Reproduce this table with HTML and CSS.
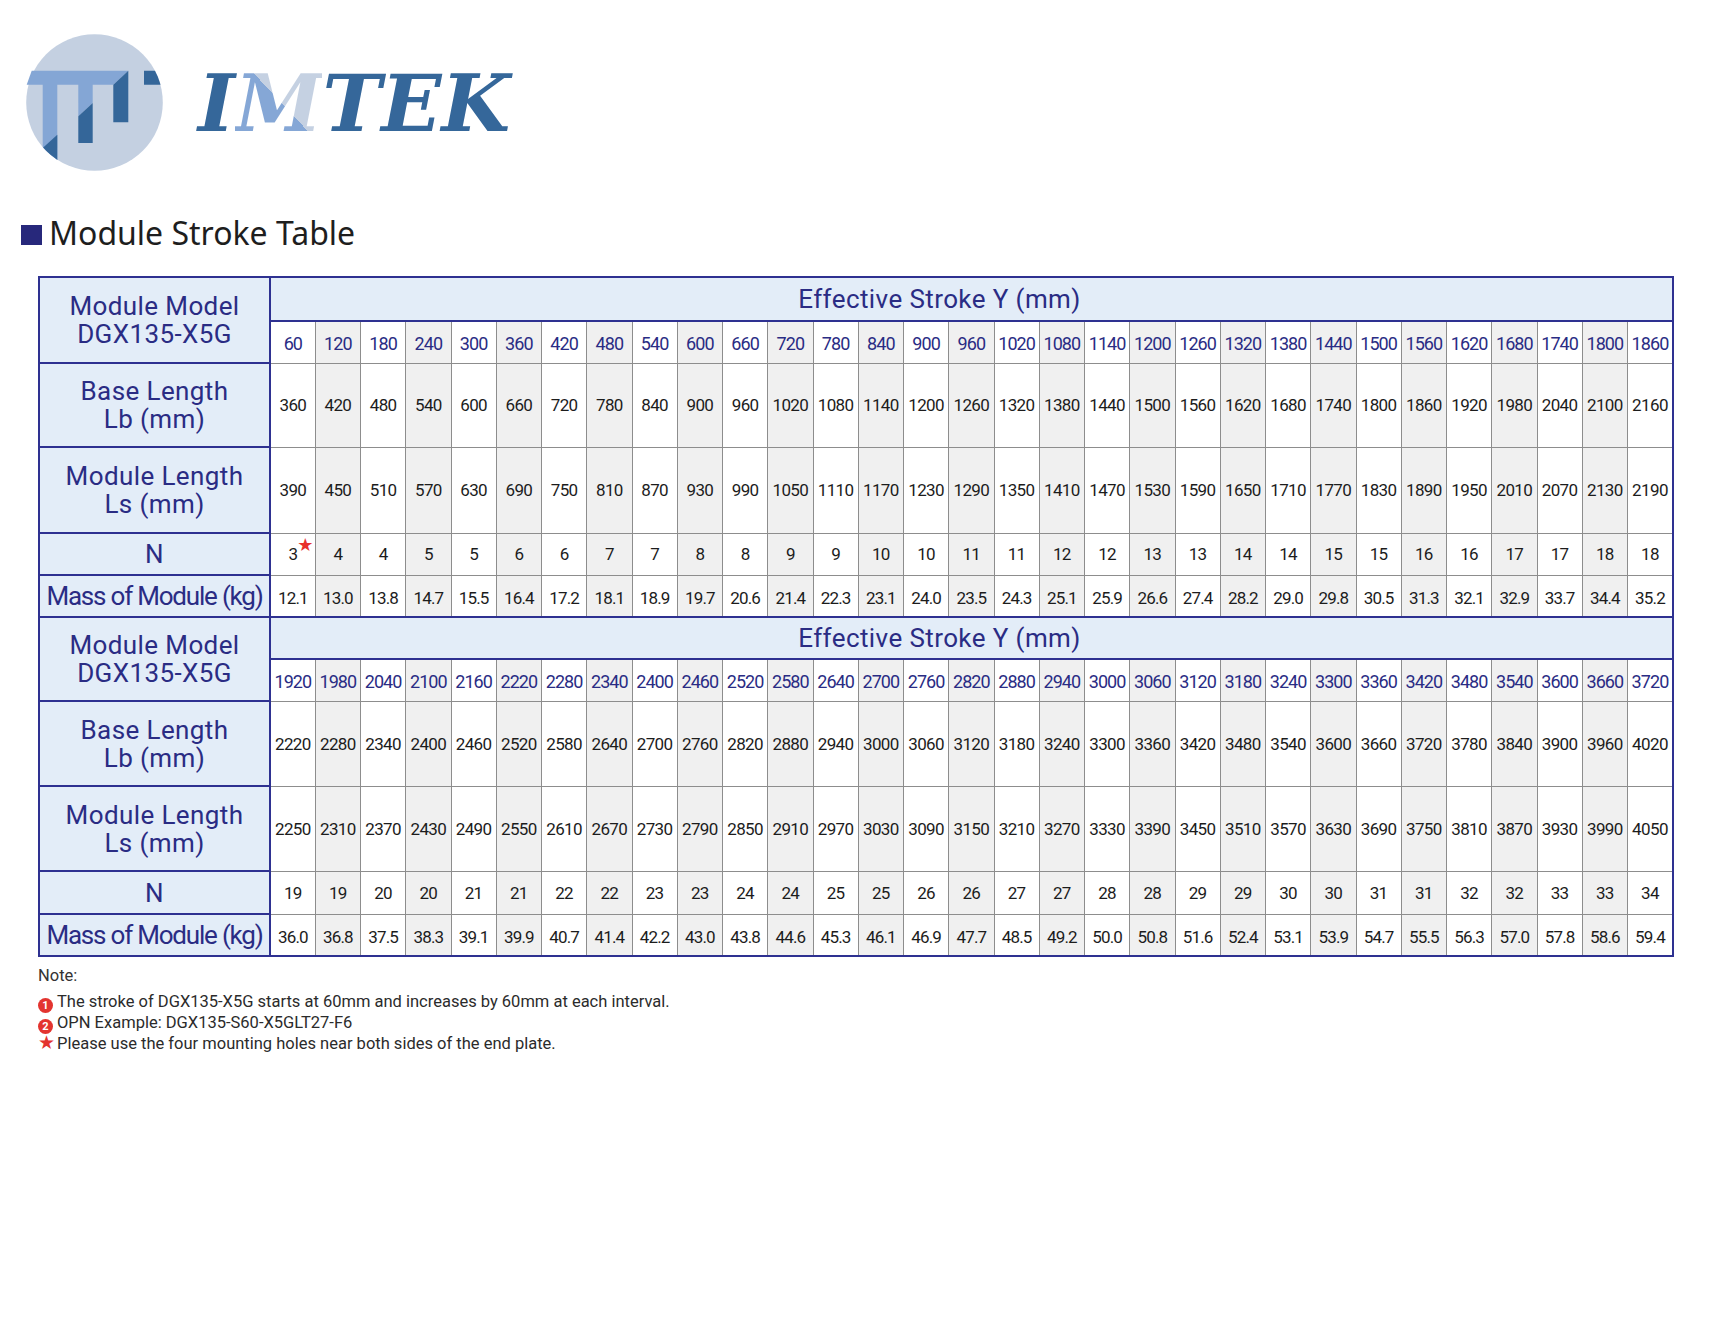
FILE: index.html
```html
<!DOCTYPE html>
<html lang="en">
<head>
<meta charset="utf-8">
<title>IMTEK – Module Stroke Table</title>
<link rel="stylesheet" href="styles.css">
</head>
<body>
<header class="brand">
  <svg class="logo-mark" viewBox="0 0 150 150" width="150" height="150" aria-hidden="true">
    <defs><clipPath id="disc"><circle cx="74.5" cy="74.5" r="68.3"/></clipPath></defs>
    <circle cx="74.5" cy="74.5" r="68.3" fill="#c4d0e1"/>
    <g clip-path="url(#disc)">
      <rect x="22.7" y="56" width="14.6" height="90" fill="#84a6d5"/>
      <polygon points="22.7,120 37.3,106.7 37.3,150 22.7,150" fill="#346699"/>
      <polygon points="58.3,56 72.7,56 72.7,75 58.3,88.3" fill="#84a6d5"/>
      <polygon points="58.3,88.3 72.7,75 72.7,115 58.3,115" fill="#346699"/>
      <polygon points="124,42.7 150,42.7 150,56.7 124,56.7" fill="#346699"/>
    </g>
    <polygon points="11.7,42.7 108.3,42.7 93.3,56.7 6.7,56.7" fill="#84a6d5"/>
    <polygon points="93.3,56.7 108.3,42.7 108.3,94.3 93.3,94.3" fill="#346699"/>
  </svg>
  <div class="wordmark">I<span class="m">M</span>TEK</div>
</header>

<h2 class="section-title"><span class="mark"></span>Module Stroke Table</h2>

<table class="stroke-table">
  <colgroup>
    <col class="c-head">
    <col><col class="alt"><col><col class="alt"><col><col class="alt"><col><col class="alt">
    <col><col class="alt"><col><col class="alt"><col><col class="alt"><col><col class="alt">
    <col><col class="alt"><col><col class="alt"><col><col class="alt"><col><col class="alt">
    <col><col class="alt"><col><col class="alt"><col><col class="alt"><col>
  </colgroup>
  <tbody>
    <tr class="r-eff">
      <th class="lab" rowspan="2">Module Model<br>DGX135-X5G</th>
      <th class="eff" colspan="31">Effective Stroke Y (mm)</th>
    </tr>
    <tr class="r-stroke">
      <td>60</td><td>120</td><td>180</td><td>240</td><td>300</td><td>360</td><td>420</td><td>480</td><td>540</td><td>600</td><td>660</td><td>720</td><td>780</td><td>840</td><td>900</td><td>960</td><td>1020</td><td>1080</td><td>1140</td><td>1200</td><td>1260</td><td>1320</td><td>1380</td><td>1440</td><td>1500</td><td>1560</td><td>1620</td><td>1680</td><td>1740</td><td>1800</td><td>1860</td>
    </tr>
    <tr class="r-base">
      <th class="lab">Base Length<br>Lb (mm)</th>
      <td>360</td><td>420</td><td>480</td><td>540</td><td>600</td><td>660</td><td>720</td><td>780</td><td>840</td><td>900</td><td>960</td><td>1020</td><td>1080</td><td>1140</td><td>1200</td><td>1260</td><td>1320</td><td>1380</td><td>1440</td><td>1500</td><td>1560</td><td>1620</td><td>1680</td><td>1740</td><td>1800</td><td>1860</td><td>1920</td><td>1980</td><td>2040</td><td>2100</td><td>2160</td>
    </tr>
    <tr class="r-module">
      <th class="lab">Module Length<br>Ls (mm)</th>
      <td>390</td><td>450</td><td>510</td><td>570</td><td>630</td><td>690</td><td>750</td><td>810</td><td>870</td><td>930</td><td>990</td><td>1050</td><td>1110</td><td>1170</td><td>1230</td><td>1290</td><td>1350</td><td>1410</td><td>1470</td><td>1530</td><td>1590</td><td>1650</td><td>1710</td><td>1770</td><td>1830</td><td>1890</td><td>1950</td><td>2010</td><td>2070</td><td>2130</td><td>2190</td>
    </tr>
    <tr class="r-n">
      <th class="lab">N</th>
      <td><span class="starred">3<span class="star">★</span></span></td><td>4</td><td>4</td><td>5</td><td>5</td><td>6</td><td>6</td><td>7</td><td>7</td><td>8</td><td>8</td><td>9</td><td>9</td><td>10</td><td>10</td><td>11</td><td>11</td><td>12</td><td>12</td><td>13</td><td>13</td><td>14</td><td>14</td><td>15</td><td>15</td><td>16</td><td>16</td><td>17</td><td>17</td><td>18</td><td>18</td>
    </tr>
    <tr class="r-mass">
      <th class="lab lab-tight">Mass of Module (kg)</th>
      <td>12.1</td><td>13.0</td><td>13.8</td><td>14.7</td><td>15.5</td><td>16.4</td><td>17.2</td><td>18.1</td><td>18.9</td><td>19.7</td><td>20.6</td><td>21.4</td><td>22.3</td><td>23.1</td><td>24.0</td><td>23.5</td><td>24.3</td><td>25.1</td><td>25.9</td><td>26.6</td><td>27.4</td><td>28.2</td><td>29.0</td><td>29.8</td><td>30.5</td><td>31.3</td><td>32.1</td><td>32.9</td><td>33.7</td><td>34.4</td><td>35.2</td>
    </tr>

    <tr class="r-eff2">
      <th class="lab" rowspan="2">Module Model<br>DGX135-X5G</th>
      <th class="eff" colspan="31">Effective Stroke Y (mm)</th>
    </tr>
    <tr class="r-stroke">
      <td>1920</td><td>1980</td><td>2040</td><td>2100</td><td>2160</td><td>2220</td><td>2280</td><td>2340</td><td>2400</td><td>2460</td><td>2520</td><td>2580</td><td>2640</td><td>2700</td><td>2760</td><td>2820</td><td>2880</td><td>2940</td><td>3000</td><td>3060</td><td>3120</td><td>3180</td><td>3240</td><td>3300</td><td>3360</td><td>3420</td><td>3480</td><td>3540</td><td>3600</td><td>3660</td><td>3720</td>
    </tr>
    <tr class="r-base2">
      <th class="lab">Base Length<br>Lb (mm)</th>
      <td>2220</td><td>2280</td><td>2340</td><td>2400</td><td>2460</td><td>2520</td><td>2580</td><td>2640</td><td>2700</td><td>2760</td><td>2820</td><td>2880</td><td>2940</td><td>3000</td><td>3060</td><td>3120</td><td>3180</td><td>3240</td><td>3300</td><td>3360</td><td>3420</td><td>3480</td><td>3540</td><td>3600</td><td>3660</td><td>3720</td><td>3780</td><td>3840</td><td>3900</td><td>3960</td><td>4020</td>
    </tr>
    <tr class="r-module2">
      <th class="lab">Module Length<br>Ls (mm)</th>
      <td>2250</td><td>2310</td><td>2370</td><td>2430</td><td>2490</td><td>2550</td><td>2610</td><td>2670</td><td>2730</td><td>2790</td><td>2850</td><td>2910</td><td>2970</td><td>3030</td><td>3090</td><td>3150</td><td>3210</td><td>3270</td><td>3330</td><td>3390</td><td>3450</td><td>3510</td><td>3570</td><td>3630</td><td>3690</td><td>3750</td><td>3810</td><td>3870</td><td>3930</td><td>3990</td><td>4050</td>
    </tr>
    <tr class="r-n2">
      <th class="lab">N</th>
      <td>19</td><td>19</td><td>20</td><td>20</td><td>21</td><td>21</td><td>22</td><td>22</td><td>23</td><td>23</td><td>24</td><td>24</td><td>25</td><td>25</td><td>26</td><td>26</td><td>27</td><td>27</td><td>28</td><td>28</td><td>29</td><td>29</td><td>30</td><td>30</td><td>31</td><td>31</td><td>32</td><td>32</td><td>33</td><td>33</td><td>34</td>
    </tr>
    <tr class="r-mass">
      <th class="lab lab-tight">Mass of Module (kg)</th>
      <td>36.0</td><td>36.8</td><td>37.5</td><td>38.3</td><td>39.1</td><td>39.9</td><td>40.7</td><td>41.4</td><td>42.2</td><td>43.0</td><td>43.8</td><td>44.6</td><td>45.3</td><td>46.1</td><td>46.9</td><td>47.7</td><td>48.5</td><td>49.2</td><td>50.0</td><td>50.8</td><td>51.6</td><td>52.4</td><td>53.1</td><td>53.9</td><td>54.7</td><td>55.5</td><td>56.3</td><td>57.0</td><td>57.8</td><td>58.6</td><td>59.4</td>
    </tr>
  </tbody>
</table>

<section class="notes">
  <p class="note-title">Note:</p>
  <p><span class="badge">1</span>The stroke of DGX135-X5G starts at 60mm and increases by 60mm at each interval.</p>
  <p><span class="badge">2</span>OPN Example: DGX135-S60-X5GLT27-F6</p>
  <p><span class="note-star">★</span>Please use the four mounting holes near both sides of the end plate.</p>
</section>
</body>
</html>
```

FILE: styles.css
```css
body {
  margin: 0;
  background: #ffffff;
  font-family: Roboto, "Noto Sans", "DejaVu Sans", sans-serif;
}

/* ---------- brand ---------- */
.brand {
  display: flex;
  align-items: center;
  padding: 28px 0 0 20px;
}
.logo-mark {
  display: block;
  flex: none;
  width: 150px;
  height: 150px;
}
.wordmark {
  margin: 2px 0 0 28px;
  font-family: "DejaVu Serif", "Liberation Serif", serif;
  font-style: italic;
  font-weight: 700;
  font-size: 79px;
  line-height: 82px;
  color: #35679a;
  white-space: nowrap;
}
.wordmark .m {
  background: linear-gradient(to top right, #85a7d6 52%, #c5d1e2 52%);
  -webkit-background-clip: text;
  background-clip: text;
  color: transparent;
}

/* ---------- heading ---------- */
.section-title {
  display: flex;
  align-items: center;
  gap: 7px;
  margin: 35px 0 0 21px;
  font-family: "Noto Sans", Roboto, sans-serif;
  font-weight: 400;
  font-size: 32px;
  line-height: 40px;
  color: #1e1e1e;
}
.mark {
  flex: none;
  width: 21px;
  height: 20px;
  margin-top: 3px;
  background: #27287b;
}

/* ---------- table ---------- */
.stroke-table {
  margin: 23px 0 0 38px;
  width: 1636px;
  table-layout: fixed;
  border-collapse: collapse;
  border: 2px solid #2e3191;
}
.c-head { width: 231px; }
col.alt { background: #f0f0f0; }

.lab,
.eff {
  background: #e3edf8;
  border: 2px solid #2e3191;
  color: #2a2c84;
  font-weight: 400;
  font-size: 26px;
  line-height: 28px;
  letter-spacing: 0.4px;
  padding: 0;
  text-align: center;
}
.eff { padding-right: 64px; }
.lab-tight { letter-spacing: -1.2px; white-space: nowrap; }

td {
  border: 1px solid #8d8d8d;
  padding: 0;
  text-align: center;
  font-size: 17px;
  letter-spacing: -0.6px;
  color: #1c1c1c;
  white-space: nowrap;
}
.r-stroke td {
  color: #2a2c84;
  font-size: 18px;
  letter-spacing: -0.9px;
  padding-top: 2px;
}
.r-mass td { letter-spacing: -0.8px; padding-top: 4px; }

.r-eff { height: 44px; }
.r-stroke { height: 42px; }
.r-base { height: 84px; }
.r-module { height: 86px; }
.r-n { height: 42px; }
.r-mass { height: 42px; }
.r-eff2 { height: 42px; }
.r-base2 { height: 85px; }
.r-module2 { height: 85px; }
.r-n2 { height: 43px; }

.starred { position: relative; }
.star {
  position: absolute;
  left: 100%;
  top: -10px;
  margin-left: 0;
  font-family: "DejaVu Sans", sans-serif;
  font-size: 18px;
  letter-spacing: 0;
  color: #e8302b;
}

/* ---------- notes ---------- */
.notes {
  margin: 9px 0 0 38px;
  font-size: 16.5px;
  color: #2b2b2b;
}
.notes p {
  margin: 0;
  line-height: 19.5px;
}
.notes .note-title {
  line-height: 20px;
  margin-bottom: 6px;
  color: #333333;
}
.badge {
  display: inline-block;
  width: 15px;
  height: 15px;
  margin-right: 4px;
  border-radius: 50%;
  background: #e3342f;
  color: #ffffff;
  font-size: 11px;
  font-weight: 700;
  line-height: 15px;
  text-align: center;
  vertical-align: -2px;
}
.note-star {
  margin-right: 2px;
  font-family: "DejaVu Sans", sans-serif;
  font-size: 19px;
  line-height: 0;
  color: #e3342f;
}
```
